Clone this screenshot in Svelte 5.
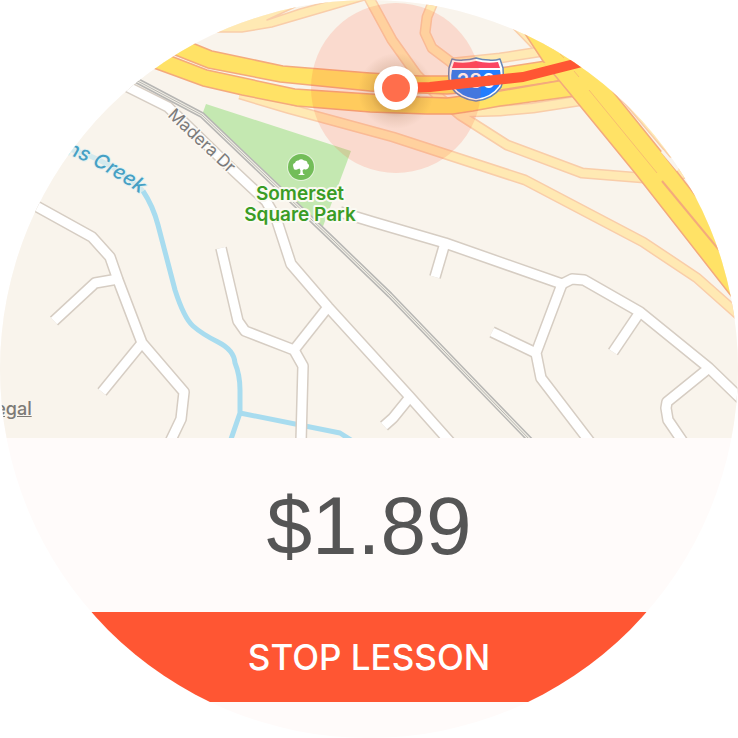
<script>
  const streets = [
    'M36 206L92 237L110 257L118 280L142 343L184 392L181 419L170 442',
    'M118 279L95 283L54 321',
    'M142 343L102 392',
    'M126 86L168 107L234 171L266 201L276 218L291 264L328 307L410 397L450 442',
    'M221 248L238 321L245 331L294 350L303 366L301 442',
    'M294 350L328 307',
    'M410 397L393 418L384 426',
    'M340 212L373 222L445 243L562 284L572 279L584 280L640 312L709 368L742 400',
    'M445 243L435 277',
    'M562 284L536 353L541 378L590 442',
    'M536 353L492 332',
    'M640 312L613 352',
    'M709 368L667 402L666 408L668 420L683 442'
  ];
  const ramps = [
    'M368 -4L392 40L417 75L440 98L460 115L507 145L582 173L644 178',
    'M434 0L427 17L425 33L432 48L452 63L500 58L545 51',
    'M240 94L290 109L393 137L525 180L643 242L697 278L742 318',
    'M465 112L500 111L533 108L585 100',
    'M672 174L700 173'
  ];
  const rail = 'M130 77L202 115L333 240L390 295L470 378L532 442';
  const creek = 'M143 191Q153 206 158 225L175 290Q184 318 193 326T218 342T235 363Q240 375 240 390V413L230 442M240 413L340 433L354 442';
  const cost = '$1.89';
</script>

<main class="watch">
  <section class="map" aria-label="Lesson route">
    <svg viewBox="0 0 738 438" role="img" aria-label="Map around Somerset Square Park">
      <defs>
        <radialGradient id="glow">
          <stop offset="45%" stop-color="#7a4a20" stop-opacity=".36" />
          <stop offset="70%" stop-color="#7a4a20" stop-opacity=".12" />
          <stop offset="100%" stop-color="#7a4a20" stop-opacity="0" />
        </radialGradient>
        <path id="creek-label" d="M66 154Q108 168 156 206" />
      </defs>

      <path class="park" d="M206 104L351 151L322 229L202 115Z" />
      <path class="creek faint" d="M66 148Q112 160 143 191" />
      <path class="creek" d={creek} />

      {#each streets as d}<path class="street-edge" {d} />{/each}
      {#each streets as d}<path class="street" {d} />{/each}

      <path class="rail-edge" d={rail} />
      <path class="rail-bed" d={rail} />
      <path class="rail-core" d={rail} />

      <path class="ramp-area" d="M190 32H242L272 27L368 -1H337L300 9L267 20L295 7L270 -10Z" />
      <path class="ramp-area" d="M505 20L532 48L560 50L540 20Z" />
      <path class="ramp-area" d="M605 80L670 157L690 157L620 70Z" />
      {#each ramps as d}<path class="ramp-edge" {d} />{/each}
      {#each ramps as d}<path class="ramp" {d} />{/each}

      <path class="highway" d="M180 38L212 51L283 66L370 73L420 76H447L500 68L552 60L570 79L500 90L447 94L420 93L370 91L280 82L208 68L160 49Z" />
      <path class="highway" d="M150 48L207 70L295 89L370 94L420 97L447 98L500 91L570 79L582 95L500 106L473 111L453 114H427L370 112L297 106L242 95L203 86L140 63Z" />
      <path class="highway" d="M516 20H560L610 88L660 150L695 195L750 268V320L635 173L572 96L543 61Z" />
      <path class="highway-join" d="M543 63L566 61L590 80L582 98L573 94L561 79Z" />
      <path class="highway-line" d="M560 54L564 58M574 71L579 77M589 90L657 173" />
      <path class="highway-line bold" d="M662 181L724 256" />
      <path class="gap" d="M662 151L678 170" />

      <g class="street-label">
        <text transform="translate(167 116) rotate(43)">Madera Dr</text>
      </g>
      <text class="creek-name"><textPath href="#creek-label">ns Creek</textPath></text>

      <circle cx="301" cy="167" r="14" fill="#e4f3da" />
      <circle cx="301" cy="167" r="13" fill="#73bd59" />
      <path
        fill="#fff"
        d="M299.500 168.500L297 169.500Q293.500 170.500 293.500 167.500Q292 163.500 295 163Q295.500 160 298.500 160.500Q301 158 304 160.500Q307.500 160.500 307.500 163.500Q310 165 308.500 167.500Q307 170.500 304 169L302.500 170.500L303 173.500L305 175H298L300.200 173.500L300.500 170.500Z"
      />
      <g class="park-name">
        <text x="300" y="200">Somerset</text>
        <text x="300" y="221">Square Park</text>
      </g>

      <path
        d="M452 59Q458 61 463 60Q470 60 476 58Q482 60 489 60Q494 61 500 59L503 68Q504 80 501 87Q493 99 476 101Q459 99 451 87Q448 80 449 68Z"
        fill="#fff"
        stroke="#6686b5"
        stroke-width="1.500"
      />
      <path d="M454 62Q465 64 476 61Q487 64 498 62L500 68H452Z" fill="#fb4661" />
      <path d="M452 70H500Q502 80 499 86Q491 97 476 99Q461 97 453 86Q450 80 452 70Z" fill="#217eff" />
      <text class="shield-number" x="476" y="88">280</text>

      <circle cx="396" cy="88" r="85" fill="#ff5633" fill-opacity=".16" />
      <circle cx="396" cy="91" r="38" fill="url(#glow)" />
      <path class="route" d="M396 88L430 87L523 77L590 60" />
      <circle cx="396" cy="88" r="22" fill="#fff" />
      <circle cx="396" cy="88" r="14" fill="#ff6e4c" />
    </svg>
    <a class="legal" href="#legal">Legal</a>
  </section>

  <p class="cost">{cost}</p>
  <button type="button" class="stop">STOP LESSON</button>
</main>

<style>
  :global(body) {
    margin: 0;
    background: #fff;
  }

  .watch {
    display: flex;
    flex-direction: column;
    width: 100%;
    aspect-ratio: 1;
    border-radius: 50%;
    overflow: hidden;
    background: #fffbfa;
    font-family: Inter, "Liberation Sans", sans-serif;
  }

  .map {
    position: relative;
    background: #f9f4ec;
  }

  .map svg {
    display: block;
    width: 100%;
  }

  path {
    stroke-linejoin: round;
  }

  .park {
    fill: #c4e8b1;
  }

  .creek,
  .street,
  .street-edge,
  .ramp,
  .ramp-edge,
  .rail-edge,
  .rail-bed,
  .rail-core,
  .highway-line,
  .gap,
  .route {
    fill: none;
  }

  .creek {
    stroke: #a8dcef;
    stroke-width: 5;
  }

  .creek.faint {
    stroke: #d3eaee;
  }

  .street-edge {
    stroke: #d6cdc3;
    stroke-width: 12;
  }

  .street {
    stroke: #fff;
    stroke-width: 9;
  }

  .rail-edge {
    stroke: #b7b6b4;
    stroke-width: 6;
  }

  .rail-bed {
    stroke: #f1eee4;
    stroke-width: 3;
  }

  .rail-core {
    stroke: #b7b6b4;
    stroke-width: 1;
  }

  .ramp-area {
    fill: #ffe9b3;
    stroke: #f9cda9;
    stroke-width: 1.5;
  }

  .ramp-edge {
    stroke: #f9cda9;
    stroke-width: 11;
  }

  .ramp {
    stroke: #ffe9b3;
    stroke-width: 8;
  }

  .highway {
    fill: #ffe266;
    stroke: #f4aa7c;
    stroke-width: 1.5;
  }

  .highway-join {
    fill: #ffe266;
  }

  .highway-line {
    stroke: #f7bd70;
    stroke-width: 1;
  }

  .highway-line.bold {
    stroke: #f4aa7c;
    stroke-width: 2;
  }

  .gap {
    stroke: #f9f4ec;
    stroke-width: 3;
  }

  .street-label,
  .creek-name,
  .park-name {
    paint-order: stroke;
    stroke-linejoin: round;
  }

  .street-label {
    fill: #7b7b7b;
    stroke: #fbf8f3;
    stroke-width: 3px;
    font-size: 17px;
  }

  .creek-name {
    fill: #46a0c4;
    stroke: #e4f0f0;
    stroke-width: 2px;
    font-size: 20px;
    font-style: italic;
    font-weight: 500;
  }

  .park-name {
    fill: #3a9c25;
    stroke: #fbfaf3;
    stroke-width: 4px;
    font-size: 19px;
    font-weight: 600;
    text-anchor: middle;
  }

  .shield-number {
    fill: #fff;
    font-size: 20px;
    font-weight: 600;
    text-anchor: middle;
  }

  .route {
    stroke: #ff5633;
    stroke-width: 10;
  }

  .legal {
    position: absolute;
    left: -15px;
    bottom: 18px;
    color: #7d7a76;
    font-size: 18px;
    font-weight: 500;
    line-height: 22px;
    text-decoration: underline;
  }

  .cost {
    display: flex;
    flex: 172;
    align-items: center;
    justify-content: center;
    margin: 0;
    padding-top: 2px;
    color: #555;
    font-family: "Liberation Sans", Arial, sans-serif;
    font-size: 82px;
    line-height: 1;
  }

  .stop {
    flex: 90;
    margin: 0 0 36px;
    padding: 0;
    border: 0;
    background: #ff5633;
    color: #fff;
    font: 500 35px Inter, "Liberation Sans", sans-serif;
    cursor: pointer;
  }
</style>
